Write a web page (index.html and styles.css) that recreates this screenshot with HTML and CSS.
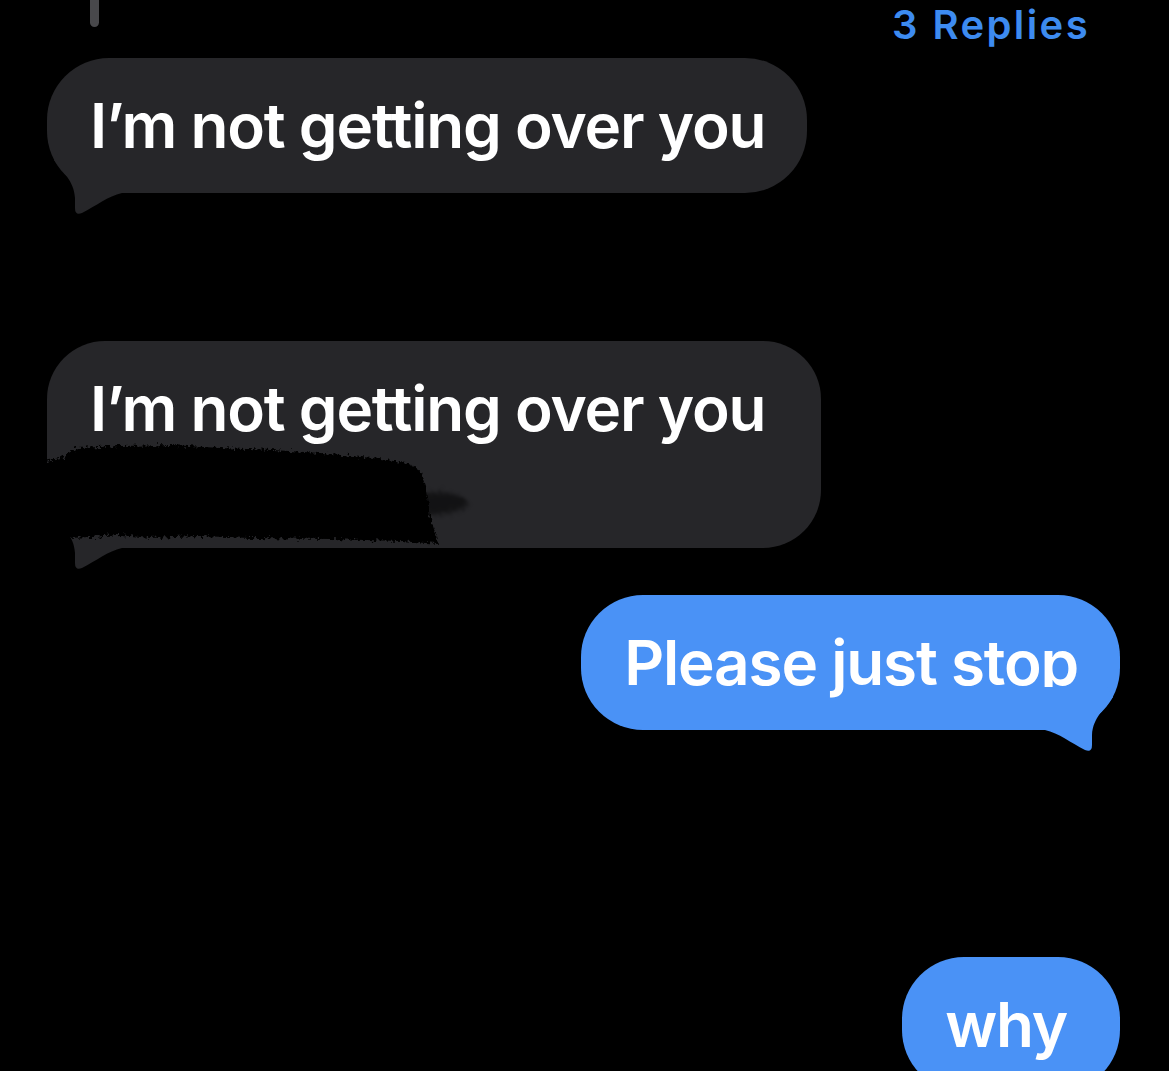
FILE: index.html
```html
<!DOCTYPE html>
<html lang="en">

<head>
    <meta charset="UTF-8">
    <meta name="viewport" content="width=device-width, initial-scale=1.0">
    <title>Messages</title>
    <link rel="stylesheet" href="styles.css">
</head>

<body>
    <div class="thread">
        <!-- Reply thread marker -->
        <div class="thread-top">
            <span class="reply-line"></span>
            <span class="reply-count">3 Replies</span>
        </div>

        <!-- Incoming message -->
        <div class="bubble received first">
            <p class="line">I’m not getting over you</p>
            <svg class="tail" viewBox="0 0 90 66" width="90" height="66">
                <path d="M7 10 C15 22 27 30 28 48 L28 58 Q28 66 35 63 C49 56 61 46 75 43 L83 43 L83 0 L13 0 Z" />
            </svg>
        </div>

        <!-- Incoming message, second line scribbled out -->
        <div class="bubble received second">
            <p class="line">I’m not getting over you</p>
            <p class="line hidden-line"></p>
            <svg class="tail" viewBox="0 0 90 66" width="90" height="66">
                <path d="M7 10 C15 22 27 30 28 48 L28 58 Q28 66 35 63 C49 56 61 46 75 43 L83 43 L83 0 L13 0 Z" />
            </svg>
            <svg class="scribble" viewBox="0 0 440 220" width="440" height="220">
                <defs>
                    <filter id="rough" x="-5%" y="-10%" width="110%" height="120%">
                        <feTurbulence type="fractalNoise" baseFrequency="0.3" numOctaves="3" seed="4" />
                        <feDisplacementMap in="SourceGraphic" scale="9" />
                    </filter>
                    <filter id="haze" x="-30%" y="-60%" width="160%" height="220%">
                        <feTurbulence type="fractalNoise" baseFrequency="0.9" numOctaves="2" seed="9" />
                        <feDisplacementMap in="SourceGraphic" scale="16" />
                        <feGaussianBlur stdDeviation="1.5" />
                    </filter>
                </defs>
                <ellipse cx="385" cy="162" rx="36" ry="11" fill="#000" opacity="0.5" filter="url(#haze)" />
                <path filter="url(#rough)" fill="#000" d="M-8 121 L13 117 L30 107 L73 105 L126 104 L173 107 L226 109 L273 112 L326 117 L360 122 L373 129 L378 144 L380 156 L383 176 L389 194 L391 203 L353 200 L283 198 L203 197 L153 195 L103 197 L73 194 L43 196 L23 197 L-8 197 Z" />
            </svg>
        </div>

        <!-- Outgoing messages -->
        <div class="bubble sent">
            <p class="line">Please just stop</p>
            <svg class="tail" viewBox="0 0 90 66" width="90" height="66">
                <path d="M7 10 C15 22 27 30 28 48 L28 58 Q28 66 35 63 C49 56 61 46 75 43 L83 43 L83 0 L13 0 Z" />
            </svg>
        </div>

        <div class="bubble sent last">
            <p class="line">why</p>
        </div>
    </div>
</body>

</html>
```

FILE: styles.css
```css
body {
    margin: 0;
    background-color: #000000;
    font-family: Inter, "Noto Sans", sans-serif;
    color: #ffffff;
    overflow: hidden;
}

/* Conversation column */
.thread {
    display: flex;
    flex-direction: column;
    padding: 0 49px 0 47px;
}

.thread-top {
    display: flex;
    justify-content: space-between;
    align-items: flex-start;
    height: 50px;
}

.reply-line {
    width: 9px;
    height: 27px;
    margin-left: 43px;
    background-color: #48484b;
    border-radius: 0 0 5px 5px;
}

.reply-count {
    margin-right: 30px;
    font-size: 40px;
    font-weight: 600;
    letter-spacing: 2.4px;
    line-height: 50px;
    color: #3d8bf0;
}

/* Message bubbles */
.bubble {
    position: relative;
    padding: 29px 42px 29px 43px;
    border-radius: 62px;
    font-size: 62px;
    font-weight: 600;
    letter-spacing: -1.2px;
    line-height: 77px;
}

.bubble .line {
    margin: 0;
    white-space: nowrap;
}

.received {
    align-self: flex-start;
    background-color: #262629;
}

.sent {
    align-self: flex-end;
    background-color: #4a92f6;
    margin-top: 47px;
}

.first {
    margin-top: 8px;
}

.second {
    margin-top: 148px;
    border-radius: 58px;
}

.hidden-line {
    width: 689px;
    height: 72px;
}

.last {
    margin-top: 227px;
    padding-right: 53px;
}

/* Bubble tails */
.tail {
    position: absolute;
    bottom: -23px;
    display: block;
}

.received .tail {
    left: 0;
    fill: #262629;
}

.sent .tail {
    right: 0;
    fill: #4a92f6;
    transform: scaleX(-1);
}

/* Marker scribble over the second line */
.scribble {
    position: absolute;
    left: 0;
    top: 0;
    overflow: visible;
}
```
